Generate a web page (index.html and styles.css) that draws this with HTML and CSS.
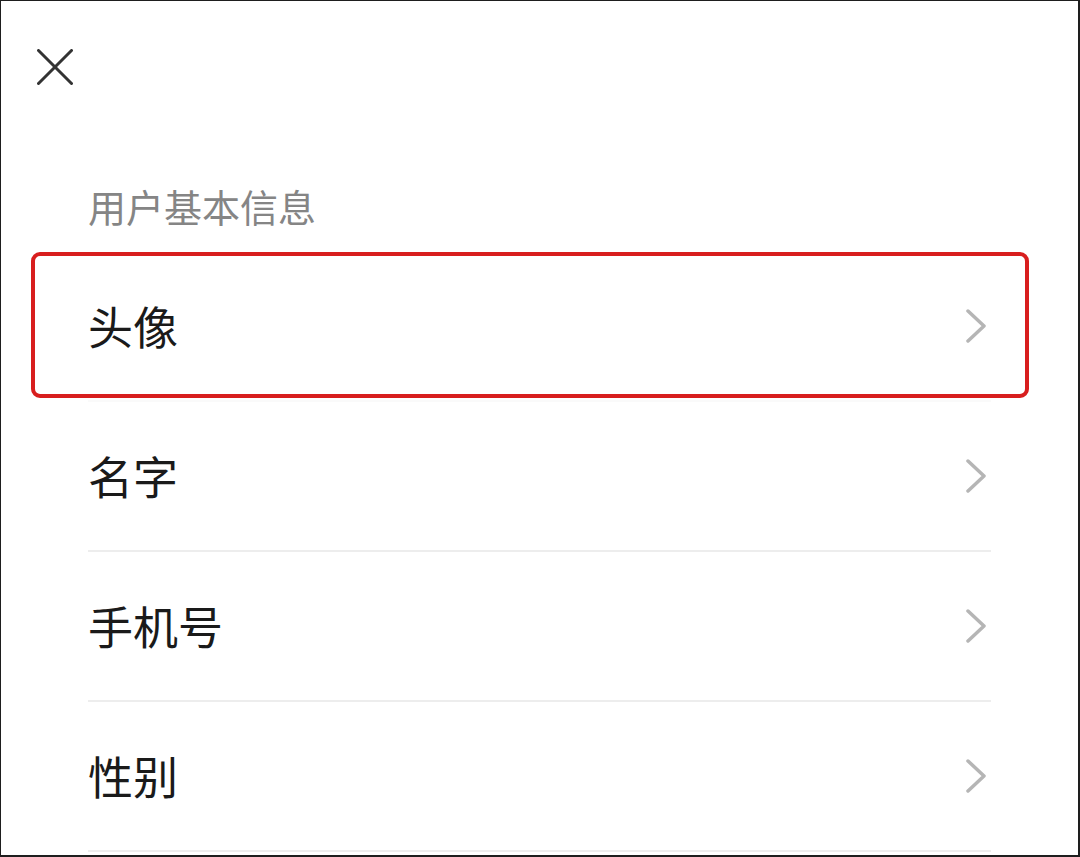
FILE: index.html
```html
<!DOCTYPE html>
<html lang="zh-CN">
<head>
    <meta charset="UTF-8">
    <meta name="viewport" content="width=device-width, initial-scale=1.0">
    <title>用户基本信息</title>
    <link rel="stylesheet" href="styles.css">
</head>
<body>
    <div class="page">
        <!-- Top bar with close button -->
        <div class="topbar">
            <svg class="close-icon" width="36" height="36" viewBox="0 0 36 36">
                <line x1="1.5" y1="1.5" x2="34.5" y2="34.5" />
                <line x1="34.5" y1="1.5" x2="1.5" y2="34.5" />
            </svg>
        </div>

        <div class="section-title">用户基本信息</div>

        <div class="info-list">
            <div class="info-row highlight">
                <span class="info-label">头像</span>
                <svg class="chevron" width="20" height="34" viewBox="0 0 20 34">
                    <polyline points="2,2 18,17 2,32" />
                </svg>
            </div>
            <div class="info-row">
                <span class="info-label">名字</span>
                <svg class="chevron" width="20" height="34" viewBox="0 0 20 34">
                    <polyline points="2,2 18,17 2,32" />
                </svg>
            </div>
            <div class="info-row">
                <span class="info-label">手机号</span>
                <svg class="chevron" width="20" height="34" viewBox="0 0 20 34">
                    <polyline points="2,2 18,17 2,32" />
                </svg>
            </div>
            <div class="info-row">
                <span class="info-label">性别</span>
                <svg class="chevron" width="20" height="34" viewBox="0 0 20 34">
                    <polyline points="2,2 18,17 2,32" />
                </svg>
            </div>
        </div>
    </div>
</body>
</html>
```

FILE: styles.css
```css
body {
    margin: 0;
    padding: 0;
    background: #ffffff;
    font-family: "Noto Sans CJK SC", "Noto Sans", sans-serif;
}

.page {
    width: 1080px;
    height: 857px;
    box-sizing: border-box;
    border: 2px solid #1e1e1e;
    border-width: 1px 2px 2px 1px;
    background: #ffffff;
    overflow: hidden;
}

.topbar {
    height: 133px;
    box-sizing: border-box;
    padding: 48px 0 0 36px;
}

.close-icon line {
    stroke: #333333;
    stroke-width: 3;
    stroke-linecap: round;
}

.section-title {
    height: 118px;
    box-sizing: border-box;
    padding: 50px 0 0 87px;
    font-size: 38px;
    line-height: 44px;
    color: #858585;
}

.info-list {
    margin: 0 87px;
}

.info-row {
    position: relative;
    display: flex;
    align-items: center;
    justify-content: space-between;
    height: 150px;
    box-sizing: border-box;
    border-bottom: 2px solid #ededed;
}

.info-row.highlight {
    border-bottom-color: #fafafa;
}

/* Red annotation box around the first row */
.info-row.highlight::after {
    content: "";
    position: absolute;
    left: -57px;
    right: -38px;
    top: 0;
    bottom: 2px;
    border: 4px solid #d81e1e;
    border-radius: 9px;
}

.info-label {
    font-size: 45px;
    color: #1a1a1a;
    line-height: 50px;
}

.chevron {
    margin-right: 5px;
}

.chevron polyline {
    fill: none;
    stroke: #b5b5b5;
    stroke-width: 3.5;
    stroke-linecap: round;
    stroke-linejoin: round;
}
```
